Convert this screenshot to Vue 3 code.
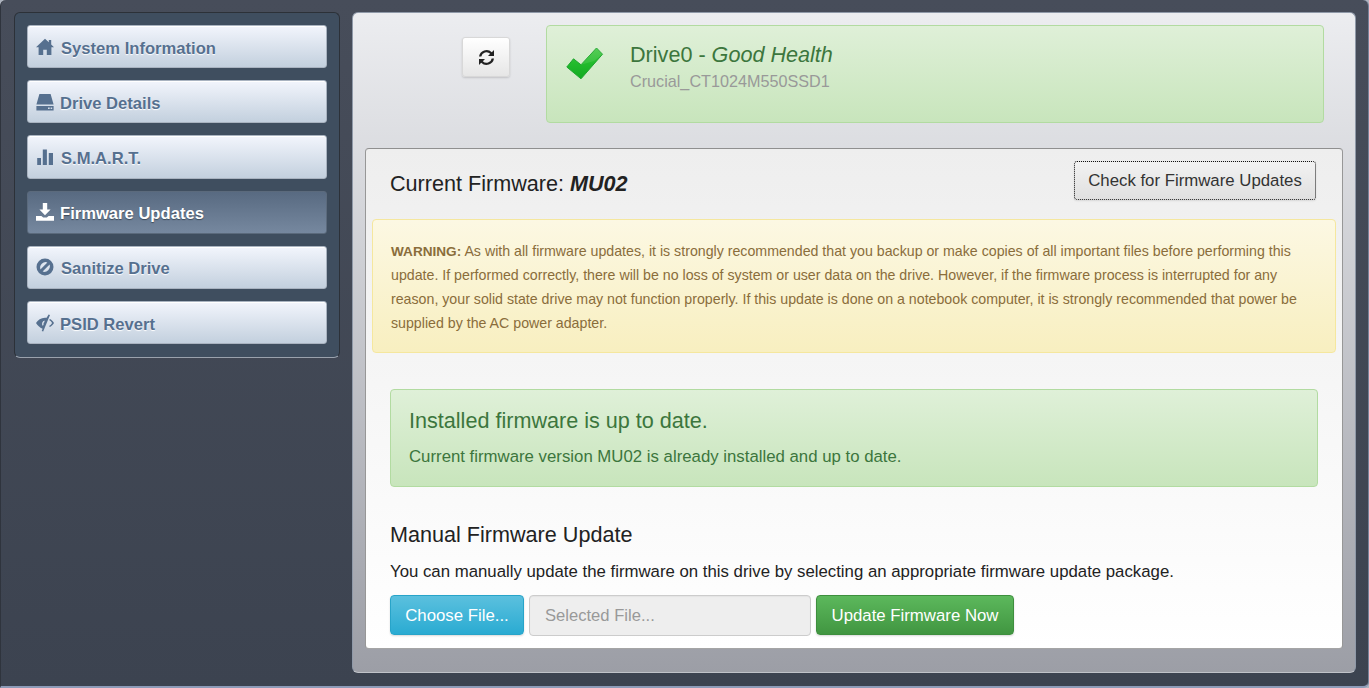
<script setup>
const nav = [
  { label: 'System Information', icon: 'home', gap: 7 },
  { label: 'Drive Details', icon: 'hdd', gap: 6 },
  { label: 'S.M.A.R.T.', icon: 'stats', gap: 7 },
  { label: 'Firmware Updates', icon: 'down', gap: 6, active: true },
  { label: 'Sanitize Drive', icon: 'ban', gap: 7 },
  { label: 'PSID Revert', icon: 'eye', gap: 6 },
]
</script>

<template>
  <div class="shell">
    <aside class="side">
      <nav class="side-panel">
        <a v-for="n in nav" :key="n.label" class="nav-btn" :class="{ active: n.active }">
          <svg class="nav-ico" viewBox="0 0 18 18" aria-hidden="true">
            <path v-if="n.icon === 'home'" d="M9 .8 0 9.200h2.600V17h4.600v-5.200h3.600V17h4.600V9.200H18L15.200 6.600V2h-2.400v2.300z" />
            <path v-else-if="n.icon === 'hdd'" fill-rule="evenodd" d="M3.400 1h11.200L17.600 11.500H.4zM.4 13h17.200v4.500H.4zM12 14.400v1.600h1.700v-1.600zM14.600 14.400v1.600h1.600v-1.600z" />
            <path v-else-if="n.icon === 'stats'" d="M1.200 10h3.800v7H1.200zM6.800 1.500h4.100V17H6.800zM12.800 5H17v12h-4.200z" />
            <path v-else-if="n.icon === 'down'" d="M6.800 0h4.400v6.600h3.400L9 12.200 3.400 6.600h3.400zM0 13h5.400l1.800 1.600h3.600L12.600 13H18v4.800H0z" />
            <path v-else-if="n.icon === 'ban'" fill-rule="evenodd" d="M9 .5a8.500 8.500 0 1 1 0 17 8.500 8.500 0 0 1 0-17zM4.400 11.400 11.400 4.400A5.600 5.600 0 0 0 4.400 11.400zM6.600 13.600A5.600 5.600 0 0 0 13.600 6.600z" />
            <path v-else fill-rule="evenodd" d="M12.600.4 14 1 7.200 17.600l-1.500-.6.9-2.300C3.700 13.600 1.400 11.400 0 9c1.800-3 5-5.200 9-5.300h1.600zM8.700 6.400a3.400 3.400 0 0 0-1.800 5.600l.7-1.700a1.600 1.600 0 0 1 .7-2zM14 4.900c1.700.9 3 2.300 4 4.100-1 1.700-2.400 3.200-4.100 4.100l-.8-1.200c1.300-.7 2.300-1.700 3-2.900-.8-1.200-1.700-2.200-3-2.900z" />
          </svg>
          <span class="nav-text" :style="{ marginLeft: n.gap + 'px' }">{{ n.label }}</span>
        </a>
      </nav>
    </aside>

    <main class="main">
      <header class="top">
        <button class="refresh" type="button" aria-label="Refresh">
          <svg viewBox="0 0 17 17" width="17" height="17" aria-hidden="true">
            <path d="M16 1v6h-6l2.200-2.200A5.200 5.200 0 0 0 3.300 7.500H1A7.600 7.600 0 0 1 13.800 3.200zM1 16v-6h6l-2.200 2.200A5.200 5.200 0 0 0 13.700 9.500H16A7.600 7.600 0 0 1 3.200 13.800z" fill="#222" />
          </svg>
        </button>
        <section class="health">
          <svg class="check" viewBox="0 0 38 34" aria-hidden="true">
            <defs>
              <linearGradient id="chk" x1="0" y1="0" x2="0" y2="1">
                <stop offset="0" stop-color="#4cc94c" />
                <stop offset="0.5" stop-color="#22bb2c" />
                <stop offset="1" stop-color="#12aa22" />
              </linearGradient>
            </defs>
            <path d="M.8 21 7.500 12.800l7.500 6L30.500 2l6 6.200L15 32.800z" fill="url(#chk)" stroke="#1fa52f" stroke-width="1" stroke-linejoin="round" />
            <path d="M15 18.800 30.500 2l6 6.200L28 15z" fill="#7fdc80" opacity=".22" />
          </svg>
          <div>
            <h2 class="drive">Drive0 - <em>Good Health</em></h2>
            <p class="model">Crucial_CT1024M550SSD1</p>
          </div>
        </section>
      </header>

      <section class="card">
        <div class="card-head">
          <h3 class="current">Current Firmware: <b><i>MU02</i></b></h3>
          <button class="check-btn" type="button">Check for Firmware Updates</button>
        </div>
        <div class="warn">
          <b>WARNING:</b> As with all firmware updates, it is strongly recommended that you backup or make copies of all important files before performing this update. If performed correctly, there will be no loss of system or user data on the drive. However, if the firmware process is interrupted for any reason, your solid state drive may not function properly. If this update is done on a notebook computer, it is strongly recommended that power be supplied by the AC power adapter.
        </div>
        <div class="body">
          <div class="ok">
            <h4>Installed firmware is up to date.</h4>
            <p>Current firmware version MU02 is already installed and up to date.</p>
          </div>
          <h3 class="manual">Manual Firmware Update</h3>
          <p class="desc">You can manually update the firmware on this drive by selecting an appropriate firmware update package.</p>
          <div class="actions">
            <button class="btn info" type="button">Choose File...</button>
            <input class="file" type="text" placeholder="Selected File..." disabled />
            <button class="btn success" type="button">Update Firmware Now</button>
          </div>
        </div>
      </section>
    </main>
  </div>
</template>

<style>
html, body { margin: 0; background: #aeb4bf; overflow: hidden; }
</style>

<style scoped>
.shell {
  box-sizing: border-box;
  width: 1369px;
  height: 688px;
  display: flex;
  gap: 12px;
  padding: 12px 12px 12px 13px;
  background: linear-gradient(#474d5a, #3c4350);
  border-left: 1px solid #2f343d;
  border-right: 1px solid #77839a;
  border-bottom: 2px solid #8d9bb8;
  border-radius: 6px 6px 6px 0;
  font-family: "Liberation Sans", Arial, sans-serif;
  color: #333;
}
.side { width: 326px; flex: none; }
.side-panel {
  box-sizing: border-box;
  height: 346px;
  padding: 12px 12px 0;
  display: flex;
  flex-direction: column;
  gap: 12px;
  background: #3f4e5f;
  border: 1px solid #2c3138;
  border-bottom-color: #9aa2ad;
  border-radius: 6px;
}
.nav-btn {
  box-sizing: border-box;
  height: 43.200px;
  display: flex;
  align-items: center;
  padding-left: 8px;
  background: linear-gradient(#f2f5fc, #c3d0de);
  border: 1px solid #a9b3c0;
  border-radius: 3px;
  box-shadow: inset 0 1px 0 #fff;
  color: #56708f;
  font-size: 16.600px;
  font-weight: 700;
  text-shadow: 0 1px 1px #fff;
}
.nav-btn.active {
  background: linear-gradient(#586a81, #76889f);
  border-color: #5b6a7c;
  box-shadow: none;
  color: #fff;
  text-shadow: 0 1px 1px #3c4a5a;
}
.nav-ico { width: 18px; height: 18px; flex: none; fill: currentColor; }
.nav-text { display: block; padding-top: 4px; }

.main {
  flex: 1;
  min-width: 0;
  height: 661px;
  box-sizing: border-box;
  padding: 12px 12px 24px;
  display: flex;
  flex-direction: column;
  background: linear-gradient(#ecedf0, #9c9ea6);
  border: 1px solid #8f99a8;
  border-bottom-color: #c0c3c9;
  border-radius: 6px;
}
.top { display: flex; align-items: flex-start; height: 123px; flex: none; }
.refresh {
  width: 48px;
  height: 40px;
  margin: 12px 36px 0 97px;
  padding: 0;
  display: flex;
  align-items: center;
  justify-content: center;
  background: linear-gradient(#fff, #e6e6e6);
  border: 1px solid #d8d8d8;
  border-radius: 3px;
  box-shadow: 0 1px 2px rgba(0,0,0,.15);
}
.health {
  box-sizing: border-box;
  width: 778px;
  height: 98px;
  display: flex;
  padding: 15px 0 0 19px;
  background: linear-gradient(#dff0d8, #c8e5bc);
  border: 1px solid #b2dba1;
  border-radius: 4px;
}
.check { width: 38px; height: 34px; margin: 5px 26px 0 0; flex: none; }
.drive { margin: 0; font-size: 21.600px; line-height: 28px; font-weight: 400; color: #3c763d; }
.drive em { font-style: italic; }
.model { margin: 1px 0 0; font-size: 16.200px; line-height: 22px; color: #999; }

.card {
  box-sizing: border-box;
  flex: none;
  height: 501px;
  display: flex;
  flex-direction: column;
  background: linear-gradient(#eeeeee, #ffffff);
  border: 1px solid #979797;
  border-top-color: #8f8f8f;
  border-bottom-color: #a5a5a5;
  border-radius: 4px;
}
.card-head {
  box-sizing: border-box;
  display: flex;
  justify-content: space-between;
  align-items: flex-start;
  height: 70px;
  flex: none;
  padding: 12px 26px 0 24px;
}
.current { margin: 9px 0 0; font-size: 21.600px; line-height: 28px; font-weight: 400; color: #222; }
.check-btn {
  box-sizing: border-box;
  width: 242px;
  height: 39px;
  padding: 0;
  font: 400 16.800px "Liberation Sans", Arial, sans-serif;
  color: #333;
  background: linear-gradient(#f2f2f2, #e0e0e0);
  border: 1px dotted #111;
  border-radius: 3px;
  box-shadow: 0 1px 2px rgba(0,0,0,.1);
}
.warn {
  box-sizing: border-box;
  height: 134px;
  margin: 0 6px 0 6px;
  padding: 19px 18px 0;
  font-size: 14.200px;
  line-height: 24px;
  color: #8a6d3b;
  background: linear-gradient(#fcf8e3, #f8efc0);
  border: 1px solid #f5e79e;
  border-radius: 4px;
}
.warn b { font-size: 13.600px; line-height: 1; }
.body { padding: 36px 24px 0; }
.ok {
  box-sizing: border-box;
  height: 98px;
  padding: 18px 18px 0;
  background: linear-gradient(#dff0d8, #c8e5bc);
  border: 1px solid #b2dba1;
  border-radius: 4px;
  color: #3c763d;
}
.ok h4 { margin: 0; font-size: 21.600px; line-height: 26px; font-weight: 400; }
.ok p { margin: 12px 0 0; font-size: 16.800px; line-height: 22px; }
.manual { margin: 34px 0 0; font-size: 21.600px; line-height: 28px; font-weight: 400; color: #222; }
.desc { margin: 12px 0 0; font-size: 16.800px; line-height: 22px; color: #222; }
.actions { display: flex; align-items: flex-start; gap: 5px; margin-top: 12px; }
.btn {
  box-sizing: border-box;
  height: 40px;
  padding: 1px 0 0;
  color: #fff;
  font: 400 16.800px "Liberation Sans", Arial, sans-serif;
  border-radius: 4px;
  box-shadow: 0 1px 2px rgba(0,0,0,.15);
}
.info { width: 134px; background: linear-gradient(#5bc0de, #2aabd2); border: 1px solid #28a4c9; }
.success { width: 198px; background: linear-gradient(#5cb85c, #419641); border: 1px solid #3e8f3e; }
.file {
  box-sizing: border-box;
  width: 282px;
  height: 41px;
  padding: 0 15px;
  font: 400 16.600px "Liberation Sans", Arial, sans-serif;
  background: #eee;
  border: 1px solid #ccc;
  border-radius: 4px;
  box-shadow: inset 0 1px 1px rgba(0,0,0,.04);
}
.file::placeholder { color: #999; opacity: 1; }
</style>
